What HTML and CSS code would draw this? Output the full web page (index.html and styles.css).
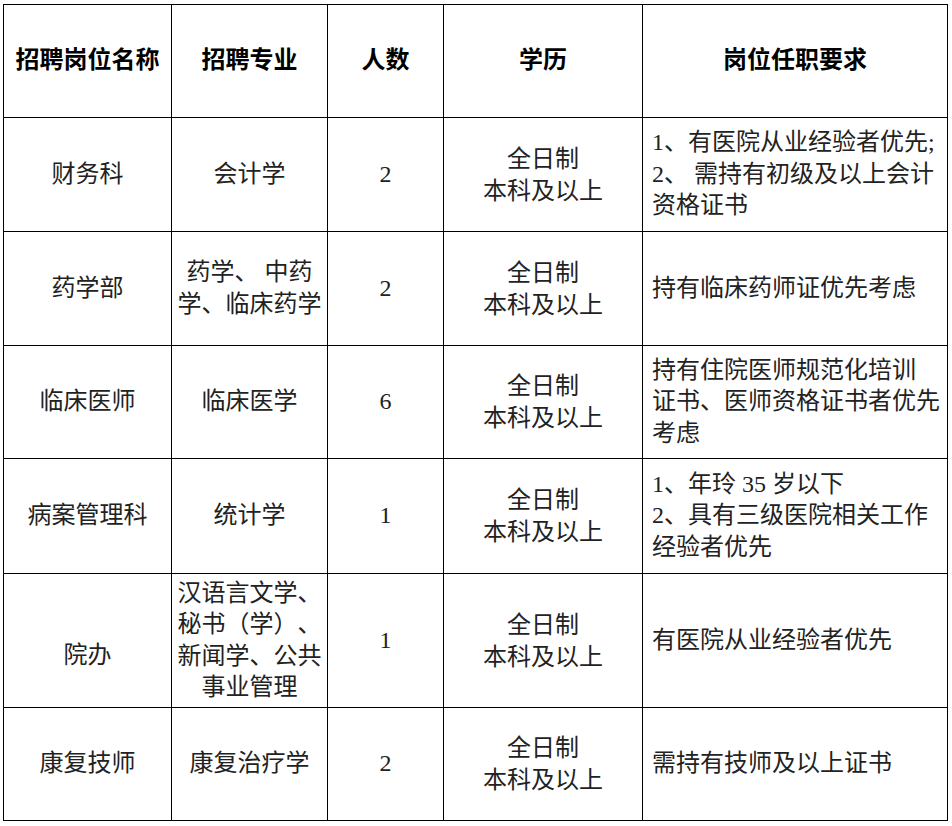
FILE: index.html
```html
<!DOCTYPE html>
<html lang="zh-CN">
<head>
<meta charset="utf-8">
<title>招聘岗位</title>
<link rel="stylesheet" href="styles.css">
</head>
<body>
<div class="table">
  <div class="cell head">招聘岗位名称</div>
  <div class="cell head">招聘专业</div>
  <div class="cell head">人数</div>
  <div class="cell head">学历</div>
  <div class="cell head">岗位任职要求</div>

  <div class="cell">财务科</div>
  <div class="cell">会计学</div>
  <div class="cell">2</div>
  <div class="cell"><span class="txt edu">全日制<br>本科及以上</span></div>
  <div class="cell req"><span class="txt">1、有医院从业经验者优先;<br>2、 需持有初级及以上会计<br>资格证书</span></div>

  <div class="cell">药学部</div>
  <div class="cell"><span class="txt">药学、 中药<br>学、临床药学</span></div>
  <div class="cell">2</div>
  <div class="cell"><span class="txt edu">全日制<br>本科及以上</span></div>
  <div class="cell req"><span class="txt">持有临床药师证优先考虑</span></div>

  <div class="cell">临床医师</div>
  <div class="cell">临床医学</div>
  <div class="cell">6</div>
  <div class="cell"><span class="txt edu">全日制<br>本科及以上</span></div>
  <div class="cell req"><span class="txt">持有住院医师规范化培训<br>证书、医师资格证书者优先<br>考虑</span></div>

  <div class="cell">病案管理科</div>
  <div class="cell">统计学</div>
  <div class="cell">1</div>
  <div class="cell"><span class="txt edu">全日制<br>本科及以上</span></div>
  <div class="cell req"><span class="txt">1、年玲 35 岁以下<br>2、具有三级医院相关工作<br>经验者优先</span></div>

  <div class="cell low">院办</div>
  <div class="cell"><span class="txt">汉语言文学、<br>秘书（学）、<br>新闻学、公共<br>事业管理</span></div>
  <div class="cell">1</div>
  <div class="cell"><span class="txt edu">全日制<br>本科及以上</span></div>
  <div class="cell req"><span class="txt">有医院从业经验者优先</span></div>

  <div class="cell">康复技师</div>
  <div class="cell">康复治疗学</div>
  <div class="cell">2</div>
  <div class="cell"><span class="txt edu">全日制<br>本科及以上</span></div>
  <div class="cell req"><span class="txt">需持有技师及以上证书</span></div>
</div>
</body>
</html>
```

FILE: styles.css
```css
html, body {
  margin: 0;
  padding: 0;
  background: #ffffff;
}

.table {
  display: grid;
  grid-template-columns: 167px 155px 115px 198px 304px;
  grid-template-rows: 112px 113px 113px 112px 114px 133px 112px;
  gap: 1px;
  width: max-content;
  margin: 4px 0 0 3px;
  border: 1px solid #000;
  background: #000;
  font-family: "Liberation Serif", "Noto Sans CJK SC", serif;
  font-size: 24px;
  color: #222;
  text-spacing-trim: space-all;
}

.cell {
  background: #ffffff;
  display: flex;
  align-items: center;
  justify-content: center;
  text-align: center;
  line-height: 31.5px;
  white-space: nowrap;
}

.head {
  font-weight: 700;
  color: #000;
}

.txt {
  display: block;
}

.edu {
  line-height: 32px;
}

.req {
  justify-content: flex-start;
  text-align: left;
  padding-left: 9px;
}

.low {
  padding-top: 30px;
}
```
